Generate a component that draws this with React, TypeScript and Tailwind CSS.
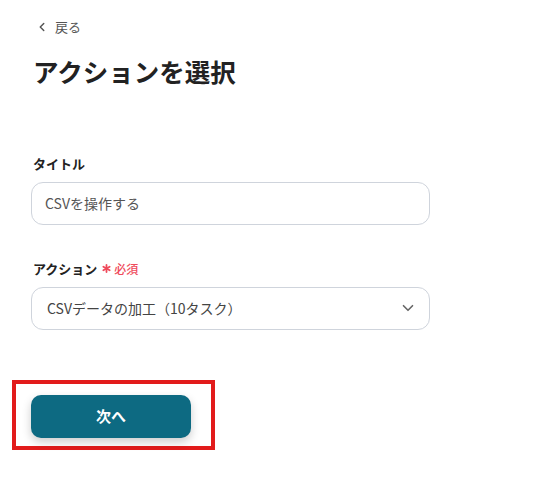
import { ChevronLeft, ChevronDown } from "lucide-react";

export default function App() {
  return (
    <div
      className="min-h-screen w-[545px] bg-white text-[#222]"
      style={{ fontFamily: '"Noto Sans CJK JP", "Noto Sans", sans-serif' }}
    >
      <div className="pl-[33px] pr-[115px] pt-[17px]">
        <div className="flex items-center gap-[6px] text-[13px] text-[#555]">
          <ChevronLeft size={14} strokeWidth={2.5} className="ml-[2px]" />
          <span>戻る</span>
        </div>
        <h1 className="mt-[14px] text-[25.5px] font-bold leading-[40px] text-[#222]">
          アクションを選択
        </h1>

        <div className="mt-[63px]">
          <div className="text-[13px] font-bold leading-[20px]">タイトル</div>
          <div className="-ml-[2px] mt-[8px] flex h-[43px] items-center rounded-[12px] border border-[#cfd4dc] px-[13px] text-[14px] text-[#555]">
            CSVを操作する
          </div>
        </div>

        <div className="mt-[34px]">
          <div className="flex items-center text-[13px] leading-[20px]">
            <span className="font-bold">アクション</span>
            {/* required mark */}
            <svg viewBox="0 0 10 10" className="ml-[5px] h-[9px] w-[9px] text-[#ef4a5b]">
              <g stroke="currentColor" strokeWidth="2" strokeLinecap="round">
                <line x1="5" y1="1" x2="5" y2="9" />
                <line x1="1.5" y1="3" x2="8.5" y2="7" />
                <line x1="1.5" y1="7" x2="8.5" y2="3" />
              </g>
            </svg>
            <span className="ml-[3px] text-[12px] font-medium text-[#ef4a5b]">必須</span>
          </div>
          <div className="-ml-[2px] mt-[8px] flex h-[43px] items-center justify-between rounded-[12px] border border-[#cfd4dc] pl-[15px] pr-[12px] text-[14px] text-[#444]">
            <span>CSVデータの加工（10タスク）</span>
            <ChevronDown size={18} strokeWidth={2.2} className="text-[#666]" />
          </div>
        </div>
      </div>

      <div className="ml-[12px] mt-[50px] w-[203px] border-[4px] border-[#e21b1b] pb-[8px] pl-[15px] pt-[11px]">
        <button className="flex h-[43px] w-[160px] items-center justify-center rounded-[10px] bg-[#0d6a82] text-[15px] font-bold text-white shadow-[0_4px_10px_rgba(0,0,0,0.2)]">
          次へ
        </button>
      </div>
    </div>
  );
}
